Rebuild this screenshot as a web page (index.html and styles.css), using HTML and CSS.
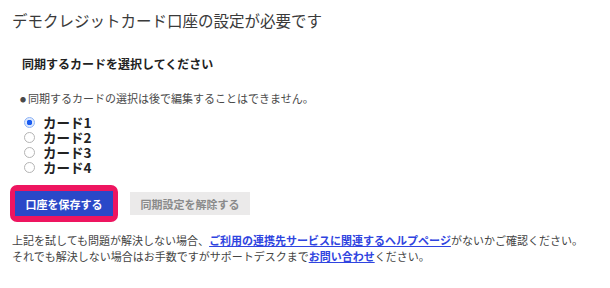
FILE: index.html
```html
<!DOCTYPE html>
<html lang="ja">
<head>
<meta charset="utf-8">
<link rel="stylesheet" href="styles.css">
</head>
<body>
<div class="page">
  <h1 class="title">デモクレジットカード口座の設定が必要です</h1>
  <div class="section">
    <h2 class="subtitle">同期するカードを選択してください</h2>
    <p class="note"><span class="dot">●</span>同期するカードの選択は後で編集することはできません。</p>
    <div class="options">
      <label class="option"><input type="radio" name="card" checked><span>カード1</span></label>
      <label class="option"><input type="radio" name="card"><span>カード2</span></label>
      <label class="option"><input type="radio" name="card"><span>カード3</span></label>
      <label class="option"><input type="radio" name="card"><span>カード4</span></label>
    </div>
  </div>
  <div class="actions">
    <div class="highlight"><button class="btn btn-primary">口座を保存する</button></div>
    <button class="btn btn-secondary">同期設定を解除する</button>
  </div>
  <p class="help">上記を試しても問題が解決しない場合、<a href="#">ご利用の連携先サービスに関連するヘルプページ</a>がないかご確認ください。<br>それでも解決しない場合はお手数ですがサポートデスクまで<a href="#">お問い合わせ</a>ください。</p>
</div>
</body>
</html>
```
FILE: styles.css
```css
html, body {
  margin: 0;
  padding: 0;
  background: #ffffff;
}
body {
  font-family: "Noto Sans CJK JP", "Noto Sans", sans-serif;
  color: #333;
}
.page {
  padding: 10px 12px 0 12px;
}
.title {
  margin: 0;
  font-size: 15.5px;
  line-height: 20px;
  font-weight: normal;
  color: #3a3a3a;
}
.section {
  padding-left: 10px;
  margin-top: 26px;
}
.subtitle {
  margin: 0;
  font-size: 12px;
  line-height: 16px;
  font-weight: bold;
  color: #222;
}
.note {
  margin: 18px 0 0 -2px;
  font-size: 11px;
  line-height: 16px;
  color: #4a4a4a;
}
.dot {
  font-size: 6px;
  vertical-align: 1px;
  margin-right: 2px;
}
.options {
  margin-top: 7px;
  display: flex;
  flex-direction: column;
}
.option {
  display: flex;
  align-items: center;
  height: 15px;
  line-height: 15px;
  font-size: 13.5px;
  font-weight: bold;
  color: #222;
}
.option input {
  appearance: none;
  -webkit-appearance: none;
  box-sizing: border-box;
  margin: 0 8px 0 2px;
  width: 11px;
  height: 11px;
  border-radius: 50%;
  border: 1px solid #b4b4b4;
  background: #fff;
}
.option input:checked {
  border: 1.5px solid #8db3f7;
  background: radial-gradient(circle, #1a5cf0 0 2.6px, #dce8fd 3px);
}
.actions {
  display: flex;
  align-items: center;
  gap: 12px;
  margin-top: 10px;
  margin-left: -2px;
}
.highlight {
  border: 5px solid #ee1560;
  border-radius: 7px;
  padding: 1px 0;
  background: #ee1560;
}
.btn {
  font-family: inherit;
  font-size: 11px;
  font-weight: bold;
  border: none;
  padding: 0 10px;
  cursor: pointer;
}
.btn-primary {
  display: block;
  background: #2a48c8;
  color: #fff;
  height: 25px;
  min-width: 98px;
}
.btn-secondary {
  background: #ebeaea;
  color: #8a8a8a;
  height: 23px;
  min-width: 120px;
}
.help {
  margin: 10px 0 0 0;
  font-size: 11px;
  line-height: 16px;
  color: #444;
}
.help a {
  color: #2f44e0;
  font-weight: bold;
  text-decoration: underline;
}
```
